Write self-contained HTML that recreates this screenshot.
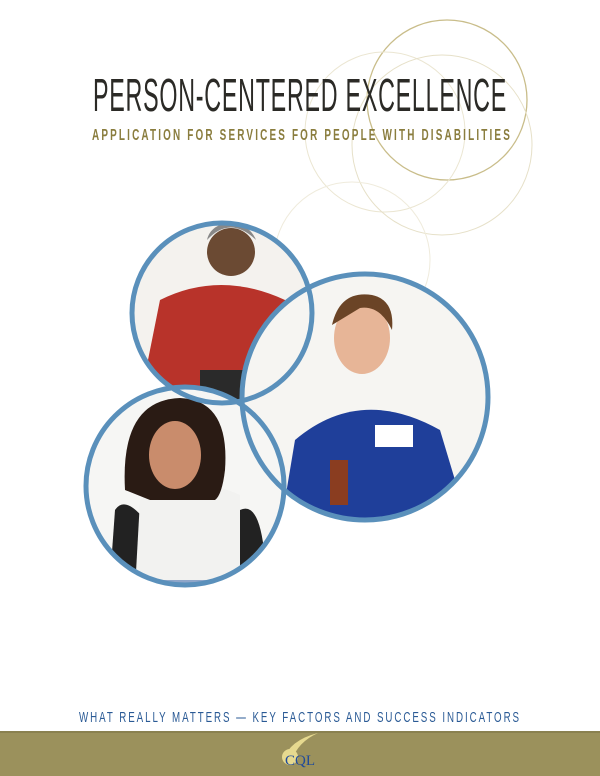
<!DOCTYPE html>
<html><head><meta charset="utf-8"><style>
body{margin:0;width:600px;height:776px;background:#fff;position:relative;overflow:hidden;font-family:"Liberation Sans",sans-serif}
</style></head><body>
<svg width="600" height="776" style="position:absolute;left:0;top:0">
<g fill="none">
<circle cx="447" cy="100" r="80" stroke="#c9bd8a" stroke-width="1.3"/>
<circle cx="385" cy="132" r="80" stroke="#ebe6d2" stroke-width="1"/>
<circle cx="442" cy="145" r="90" stroke="#e6e0c8" stroke-width="1"/>
<circle cx="352" cy="260" r="78" stroke="#efebdc" stroke-width="1"/>
</g>
<defs>
<clipPath id="c1"><circle cx="222" cy="313" r="90"/></clipPath>
<clipPath id="c2"><circle cx="365" cy="397" r="123"/></clipPath>
<clipPath id="c3"><circle cx="185" cy="486" r="99"/></clipPath>
</defs>
<g clip-path="url(#c1)">
<rect x="120" y="210" width="210" height="210" fill="#f4f2ee"/>
<path d="M140 400 L160 300 Q220 270 285 300 L305 400Z" fill="#b8332a"/>
<rect x="200" y="370" width="120" height="30" fill="#2a2a2a"/>
<circle cx="231" cy="252" r="24" fill="#6b4a33"/>
<path d="M207 240 Q230 215 256 240 Q250 225 231 222 Q210 225 207 240Z" fill="#888"/>
</g>
<g clip-path="url(#c2)">
<rect x="240" y="270" width="260" height="260" fill="#f6f5f2"/>
<path d="M280 530 L295 440 Q360 385 440 430 L470 530Z" fill="#1f3f9a"/>
<ellipse cx="362" cy="338" rx="28" ry="36" fill="#e7b597"/>
<path d="M332 325 Q340 290 372 295 Q395 300 392 330 Q380 305 360 308Z" fill="#6b4426"/>
<rect x="330" y="460" width="18" height="45" fill="#8a3d20"/>
<rect x="375" y="425" width="38" height="22" fill="#fff"/>
</g>
<g clip-path="url(#c3)">
<rect x="80" y="380" width="220" height="220" fill="#f6f6f4"/>
<path d="M110 580 L115 510 Q125 495 145 520 L145 590Z" fill="#222"/>
<path d="M240 510 Q260 500 265 560 L240 590Z" fill="#222"/>
<path d="M135 590 L140 500 Q185 470 240 495 L240 590Z" fill="#f2f2f0"/>
<path d="M140 580 L240 580 L240 600 L140 600Z" fill="#8fa6c9"/>
<path d="M125 490 Q120 400 180 398 Q230 400 225 470 Q222 495 215 500 L150 500Z" fill="#2a1b14"/>
<ellipse cx="175" cy="455" rx="26" ry="34" fill="#c98c6c"/>
</g>
<g fill="none" stroke="#5a90bb" stroke-width="5">
<circle cx="222" cy="313" r="90"/>
<circle cx="185" cy="486" r="99"/>
<circle cx="365" cy="397" r="123"/>
</g>
<text x="93" y="111" font-size="46" letter-spacing="1.5" fill="#2b2a26" textLength="414" lengthAdjust="spacingAndGlyphs">PERSON-CENTERED EXCELLENCE</text>
<text x="92" y="140" font-size="16" font-weight="bold" letter-spacing="3.5" fill="#8a7d3e" textLength="420" lengthAdjust="spacingAndGlyphs">APPLICATION FOR SERVICES FOR PEOPLE WITH DISABILITIES</text>
<text x="79" y="722" font-size="15" letter-spacing="3" fill="#2a5a95" textLength="442" lengthAdjust="spacingAndGlyphs">WHAT REALLY MATTERS — KEY FACTORS AND SUCCESS INDICATORS</text>
<rect x="0" y="731" width="600" height="45" fill="#9b915c"/>
<rect x="0" y="731" width="600" height="2" fill="#8a8150"/>
<path d="M283 760 Q290 740 318 733 Q298 742 292 760Z" fill="#e6d98f"/>
<ellipse cx="290" cy="757" rx="8" ry="8" fill="#e6d98f"/>
<text x="300" y="765" text-anchor="middle" font-family="Liberation Serif,serif" font-size="15" fill="#1f4a9a">CQL</text>
</svg>
</body></html>
